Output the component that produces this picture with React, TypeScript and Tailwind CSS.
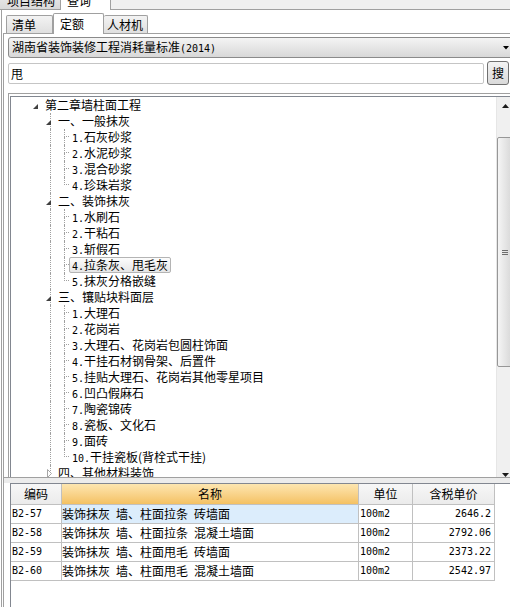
import React from 'react'

// Tree rows of the 定额 browser (第二章墙柱面工程)
type TreeRow =
  | { kind: 'chapter'; text: string }
  | { kind: 'section'; text: string; collapsed?: boolean; last?: boolean }
  | { kind: 'leaf'; num: string; text: string; last?: boolean; selected?: boolean }

const tree: TreeRow[] = [
  { kind: 'chapter', text: '第二章墙柱面工程' },
  { kind: 'section', text: '一、一般抹灰' },
  { kind: 'leaf', num: '1.', text: '石灰砂浆' },
  { kind: 'leaf', num: '2.', text: '水泥砂浆' },
  { kind: 'leaf', num: '3.', text: '混合砂浆' },
  { kind: 'leaf', num: '4.', text: '珍珠岩浆', last: true },
  { kind: 'section', text: '二、装饰抹灰' },
  { kind: 'leaf', num: '1.', text: '水刷石' },
  { kind: 'leaf', num: '2.', text: '干粘石' },
  { kind: 'leaf', num: '3.', text: '斩假石' },
  { kind: 'leaf', num: '4.', text: '拉条灰、甩毛灰', selected: true },
  { kind: 'leaf', num: '5.', text: '抹灰分格嵌缝', last: true },
  { kind: 'section', text: '三、镶贴块料面层' },
  { kind: 'leaf', num: '1.', text: '大理石' },
  { kind: 'leaf', num: '2.', text: '花岗岩' },
  { kind: 'leaf', num: '3.', text: '大理石、花岗岩包圆柱饰面' },
  { kind: 'leaf', num: '4.', text: '干挂石材钢骨架、后置件' },
  { kind: 'leaf', num: '5.', text: '挂贴大理石、花岗岩其他零星项目' },
  { kind: 'leaf', num: '6.', text: '凹凸假麻石' },
  { kind: 'leaf', num: '7.', text: '陶瓷锦砖' },
  { kind: 'leaf', num: '8.', text: '瓷板、文化石' },
  { kind: 'leaf', num: '9.', text: '面砖' },
  { kind: 'leaf', num: '10.', text: '干挂瓷板(背栓式干挂)', last: true },
  { kind: 'section', text: '四、其他材料装饰', collapsed: true, last: true },
]

const quotas = [
  { code: 'B2-57', name: '装饰抹灰 墙、柱面拉条 砖墙面', unit: '100m2', price: '2646.2' },
  { code: 'B2-58', name: '装饰抹灰 墙、柱面拉条 混凝土墙面', unit: '100m2', price: '2792.06' },
  { code: 'B2-59', name: '装饰抹灰 墙、柱面甩毛 砖墙面', unit: '100m2', price: '2373.22' },
  { code: 'B2-60', name: '装饰抹灰 墙、柱面甩毛 混凝土墙面', unit: '100m2', price: '2542.97' },
]

const mono = "font-['DejaVu_Sans_Mono',monospace] text-[10px]"
const dot = 'border-dotted border-[#a0a0a0]'

function Expanded() {
  return (
    <svg width="5" height="5" viewBox="0 0 5 5">
      <polygon points="5,0 5,5 0,5" fill="#404040" />
    </svg>
  )
}

function Collapsed() {
  return (
    <svg width="5" height="9" viewBox="0 0 5 9">
      <polygon points="0.5,0.5 4.5,4.5 0.5,8.5" fill="#fff" stroke="#a6a6a6" />
    </svg>
  )
}

function Label({ num, text, selected }: { num?: string; text: string; selected?: boolean }) {
  return (
    <div
      className={`h-[16px] px-[2px] border rounded-[2px] whitespace-nowrap leading-[14px] ${
        selected ? 'border-[#b4b4b4] bg-linear-to-b from-[#fcfcfc] to-[#e6e6e6]' : 'border-transparent'
      }`}
    >
      {num && <span className={mono}>{num}</span>}
      {text}
    </div>
  )
}

function Row({ row }: { row: TreeRow }) {
  if (row.kind === 'chapter') {
    return (
      <div className="flex h-[16px] shrink-0">
        <div className="w-[20px] shrink-0" />
        <div className="w-[11px] shrink-0 relative">
          <div className="absolute left-[2px] top-[7px] flex">
            <Expanded />
          </div>
        </div>
        <Label text={row.text} />
      </div>
    )
  }
  if (row.kind === 'section') {
    return (
      <div className="flex h-[16px] shrink-0">
        <div className="w-[33px] shrink-0" />
        <div className="w-[11px] shrink-0 relative">
          <div className={`absolute left-[6px] top-0 border-l ${dot} ${row.last ? 'h-[8px]' : 'h-[16px]'}`} />
          {row.collapsed ? (
            <div className="absolute left-[3px] top-[4px] flex">
              <Collapsed />
            </div>
          ) : (
            <div className="absolute left-[2px] top-[7px] flex bg-white">
              <Expanded />
            </div>
          )}
        </div>
        <Label text={row.text} />
      </div>
    )
  }
  return (
    <div className="flex h-[16px] shrink-0">
      <div className="w-[39px] shrink-0" />
      <div className={`w-[14px] shrink-0 border-l ${dot}`} />
      <div className="w-[5px] shrink-0 flex flex-col">
        <div className={`h-[8px] border-l border-b ${dot}`} />
        {!row.last && <div className={`h-[8px] border-l ${dot}`} />}
      </div>
      <Label num={row.num} text={row.text} selected={row.selected} />
    </div>
  )
}

function Scrollbar() {
  return (
    <div className="w-[17px] h-[386px] shrink-0 flex flex-col bg-[#f0f0f0] border-l border-[#e6e6e6]">
      <div className="h-[17px] shrink-0 flex items-center justify-center">
        <svg width="7" height="4" viewBox="0 0 7 4">
          <polygon points="3.5,0 7,4 0,4" fill="#1a1a1a" />
        </svg>
      </div>
      <div className="h-[23px] shrink-0" />
      <div className="h-[230px] shrink-0 mr-px border border-[#979797] rounded-[2px] bg-linear-to-r from-[#f5f5f5] to-[#d9d9d9] flex items-center justify-center">
        <svg width="6" height="5" viewBox="0 0 6 5">
          <path d="M0 0.5H6M0 2.5H6M0 4.5H6" stroke="#6e6e6e" strokeWidth="1" />
        </svg>
      </div>
      <div className="flex-1" />
      <div className="h-[17px] shrink-0 flex items-center justify-center">
        <svg width="7" height="4" viewBox="0 0 7 4">
          <polygon points="0,0 7,0 3.5,4" fill="#1a1a1a" />
        </svg>
      </div>
    </div>
  )
}

export default function App() {
  return (
    <div className="w-[510px] h-[607px] overflow-hidden bg-white text-black text-[12px] leading-[16px] font-['Noto_Sans_CJK_SC',sans-serif] flex flex-col">
      {/* Outer tabs */}
      <div className="h-[10px] shrink-0 flex items-end bg-[#f0f0f0] border-b border-[#a0a0a0]">
        <div className="w-[61px] h-[16px] shrink-0 pl-[7px] bg-linear-to-b from-[#ececec] to-[#d9d9d9] border-r border-[#a0a0a0] whitespace-nowrap">
          项目结构
        </div>
        <div className="w-[50px] h-[17px] shrink-0 -mb-px pl-[6px] bg-white border-r border-[#a0a0a0] relative whitespace-nowrap">
          查询
        </div>
      </div>

      <div className="flex-1 min-h-0 flex flex-col ml-px border-l border-[#a0a0a0]">
        {/* Inner tabs */}
        <div className="h-[23px] shrink-0 flex items-end pl-[4px]">
          <div className="w-[47px] h-[18px] shrink-0 border border-b-0 border-[#a0a0a0] rounded-t-[2px] bg-linear-to-b from-[#f3f3f3] to-[#dfdfdf] pl-[5px] leading-[17px]">
            清单
          </div>
          <div className="w-[51px] h-[21px] shrink-0 -mb-px border border-b-0 border-[#a0a0a0] rounded-t-[2px] bg-white pl-[6px] leading-[19px] relative z-10">
            定额
          </div>
          <div className="w-[44px] h-[18px] shrink-0 border border-l-0 border-b-0 border-[#a0a0a0] rounded-t-[2px] bg-linear-to-b from-[#f3f3f3] to-[#dfdfdf] pl-[3px] leading-[17px] whitespace-nowrap">
            人材机
          </div>
        </div>

        <div className="flex-1 min-h-0 flex flex-col ml-px border-l border-t border-[#a0a0a0] pl-[4px] pt-[3px]">
          {/* Standard selector */}
          <div className="w-[510px] h-[21px] shrink-0 flex items-center justify-between pl-[3px] pr-[8px] border border-[#8a8a8a] rounded-[3px] bg-linear-to-b from-[#f4f4f4] to-[#d8d8d8]">
            <span className="whitespace-nowrap leading-[19px]">
              湖南省装饰装修工程消耗量标准<span className={mono}>(2014)</span>
            </span>
            <svg width="6" height="4" viewBox="0 0 6 4">
              <polygon points="0,0 6,0 3,3.5" fill="#000" />
            </svg>
          </div>

          {/* Search */}
          <div className="mt-[3px] h-[24px] shrink-0 flex items-center gap-[3px]">
            <div className="w-[476px] h-[21px] shrink-0 border border-[#c5c5c5] rounded-[2px] pl-[2px] leading-[19px]">甩</div>
            <div className="w-[22px] h-[24px] shrink-0 border border-[#707070] rounded-[3px] bg-linear-to-b from-[#f3f3f3] to-[#dadada] flex items-center justify-center">
              搜
            </div>
          </div>

          {/* Tree */}
          <div className="mt-[8px] shrink-0 border-t border-l border-[#a0a0a0] pt-[2px] pl-px">
            <div className="w-[503px] h-[381px] flex overflow-hidden border-t border-l border-[#828790]">
              <div className="w-[485px] shrink-0 flex flex-col">
                {tree.map((row, i) => (
                  <Row key={i} row={row} />
                ))}
              </div>
              <Scrollbar />
            </div>
          </div>

          {/* Splitter */}
          <div className="h-[6px] shrink-0 -ml-[4px] border-t border-[#a0a0a0] bg-[#ececec]" />

          {/* Quota table */}
          <div className="flex-1 ml-[2px] border-l border-t border-[#828790]">
            <div className="flex h-[21px]">
              <div className="w-[51px] shrink-0 border-r border-b border-[#c0c0c0] bg-linear-to-b from-[#f7f7f7] to-[#ebebeb] flex items-center justify-center">
                编码
              </div>
              <div className="w-[297px] shrink-0 border-r border-b border-[#c0c0c0] bg-linear-to-b from-[#fde6b0] to-[#f4c162] flex items-center justify-center">
                名称
              </div>
              <div className="w-[54px] shrink-0 border-r border-b border-[#c0c0c0] bg-linear-to-b from-[#f7f7f7] to-[#ebebeb] flex items-center justify-center">
                单位
              </div>
              <div className="w-[82px] shrink-0 border-r border-b border-[#c0c0c0] bg-linear-to-b from-[#f7f7f7] to-[#ebebeb] flex items-center justify-center">
                含税单价
              </div>
            </div>
            {quotas.map((q, i) => (
              <div key={q.code} className="flex h-[19px]">
                <div className={`w-[51px] shrink-0 border-r border-b border-[#c0c0c0] pl-px flex items-center ${mono}`}>{q.code}</div>
                <div
                  className={`w-[297px] shrink-0 border-r border-b border-[#c0c0c0] flex items-center whitespace-nowrap ${
                    i === 0 ? 'bg-[#dcedfc]' : ''
                  }`}
                >
                  {q.name.split(' ').map((part, j) => (
                    <span key={j} className={j ? 'ml-[6px]' : ''}>
                      {part}
                    </span>
                  ))}
                </div>
                <div className={`w-[54px] shrink-0 border-r border-b border-[#c0c0c0] pl-px flex items-center ${mono}`}>{q.unit}</div>
                <div className={`w-[82px] shrink-0 border-r border-b border-[#c0c0c0] pr-[3px] flex items-center justify-end ${mono}`}>
                  {q.price}
                </div>
              </div>
            ))}
          </div>
        </div>
      </div>
    </div>
  )
}
